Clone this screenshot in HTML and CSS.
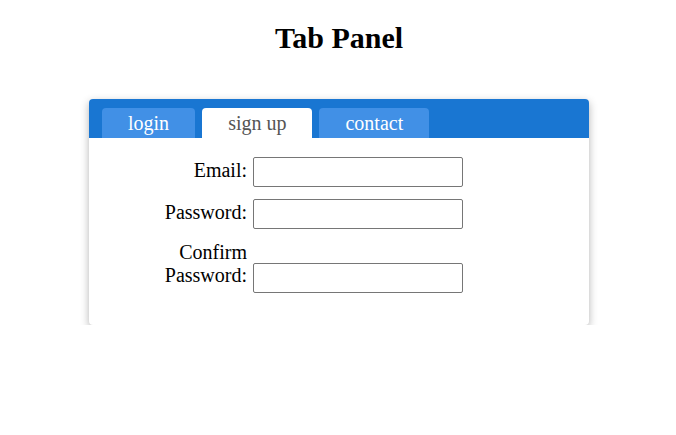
FILE: index.html
```html
<!DOCTYPE html>
<html>
<head>
<meta charset="utf-8">
<link rel="stylesheet" href="styles.css">
</head>
<body>
<h1 class="title">Tab Panel</h1>
<div class="panel">
  <div class="tabs">
    <div class="tab">login</div>
    <div class="tab active">sign up</div>
    <div class="tab">contact</div>
  </div>
  <div class="body">
    <div class="row"><label class="label">Email:</label><input class="field" type="text"></div>
    <div class="row"><label class="label">Password:</label><input class="field" type="password"></div>
    <div class="row"><label class="label">Confirm Password:</label><input class="field" type="password"></div>
  </div>
</div>
</body>
</html>
```

FILE: styles.css
```css
body {
  margin: 8px 7px 8px 9px;
  font-family: "Liberation Serif", serif;
  background: #fff;
  color: #000;
}
.title {
  text-align: center;
  font-size: 30px;
  margin: 13px 0 0;
}
.panel {
  width: 500px;
  margin: 44px auto 0;
  background: #fff;
  border-radius: 4px;
  box-shadow: 0 3px 8px rgba(0,0,0,0.3);
  overflow: hidden;
}
.tabs {
  display: flex;
  gap: 7px;
  background: #1976d2;
  padding: 9px 0 0 13px;
}
.tab {
  height: 30px;
  line-height: 30px;
  padding: 0 26px;
  font-size: 20px;
  color: #fff;
  background: #4190e6;
  border-radius: 4px 4px 0 0;
}
.tab.active {
  background: #fff;
  color: #555;
}
.body {
  padding: 19px 0 32px 58px;
  display: flex;
  flex-direction: column;
  gap: 12px;
}
.row {
  display: flex;
  align-items: last baseline;
  gap: 6px;
}
.label {
  width: 100px;
  text-align: right;
  font-size: 20px;
}
.field {
  box-sizing: border-box;
  width: 210px;
  height: 30px;
  margin: 0;
  border: 1px solid #767676;
  border-radius: 2px;
  font-size: 13px;
}
```
